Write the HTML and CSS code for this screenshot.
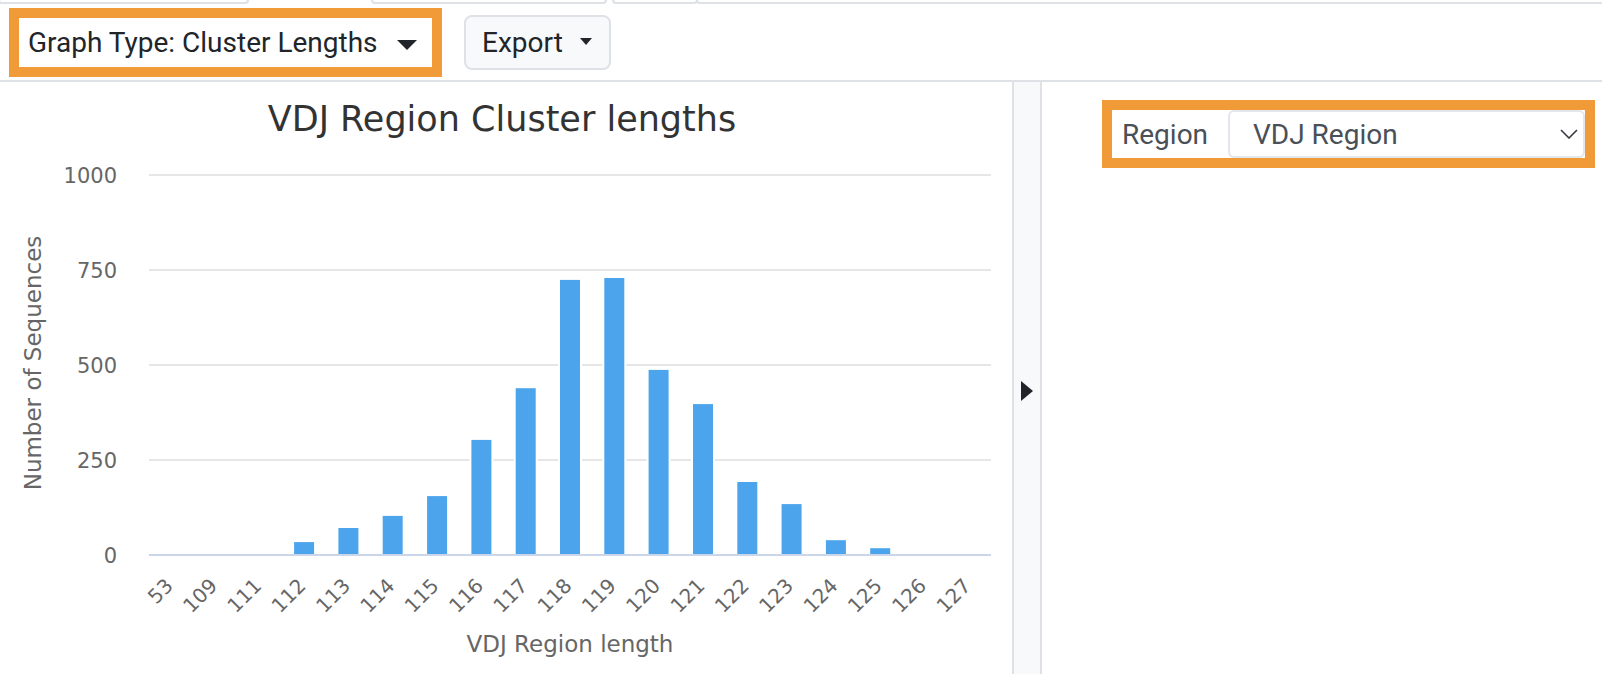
FILE: index.html
```html
<!DOCTYPE html>
<html lang="en">
<head>
    <meta charset="UTF-8">
    <meta name="viewport" content="width=device-width, initial-scale=1.0">
    <title>Cluster Lengths</title>
    <link rel="stylesheet" href="styles.css">
</head>
<body>
    <!-- bottom edge of the tab bar above -->
    <div class="tabs">
        <div class="tab tab-1"></div>
        <div class="tab tab-2"></div>
        <div class="tab tab-3"></div>
        <div class="tab tab-4"></div>
    </div>

    <div class="toolbar">
        <div class="highlight">
            <button class="graph-btn">Graph Type: Cluster Lengths <span class="caret"></span></button>
        </div>
        <button class="export-btn">Export <span class="caret caret-sm"></span></button>
    </div>

    <div class="main">
        <div class="chart-panel">
            <svg class="chart" viewBox="0 0 1012 592" xmlns="http://www.w3.org/2000/svg">
                <text class="chart-title" x="502" y="49" text-anchor="middle">VDJ Region Cluster lengths</text>

                <!-- grid -->
                <g class="grid">
                    <line x1="149" y1="93" x2="991" y2="93"/>
                    <line x1="149" y1="188" x2="991" y2="188"/>
                    <line x1="149" y1="283" x2="991" y2="283"/>
                    <line x1="149" y1="378" x2="991" y2="378"/>
                </g>

                <g class="y-labels" text-anchor="end">
                    <text x="117" y="101">1000</text>
                    <text x="117" y="196">750</text>
                    <text x="117" y="291">500</text>
                    <text x="117" y="386">250</text>
                    <text x="117" y="481">0</text>
                </g>

                <!-- bars -->
                <g class="bars">
                    <rect x="293.1" y="459.1" width="22" height="14.9"/>
                    <rect x="337.4" y="445" width="22" height="29"/>
                    <rect x="381.7" y="432.9" width="22" height="41.1"/>
                    <rect x="426.1" y="413.1" width="22" height="60.9"/>
                    <rect x="470.4" y="356.9" width="22" height="117.1"/>
                    <rect x="514.7" y="305.2" width="22" height="168.8"/>
                    <rect x="559" y="196.9" width="22" height="277.1"/>
                    <rect x="603.3" y="195" width="22" height="279"/>
                    <rect x="647.6" y="286.9" width="22" height="187.1"/>
                    <rect x="692" y="321.1" width="22" height="152.9"/>
                    <rect x="736.3" y="399" width="22" height="75"/>
                    <rect x="780.6" y="421.1" width="22" height="52.9"/>
                    <rect x="824.9" y="457.2" width="22" height="16.8"/>
                    <rect x="869.2" y="465.2" width="22" height="8.8"/>
                </g>

                <line class="axis" x1="149" y1="473" x2="991" y2="473"/>

                <g class="x-labels" text-anchor="end">
                    <text x="174.2" y="505" transform="rotate(-45 174.2 505)">53</text>
                    <text x="218.5" y="505" transform="rotate(-45 218.5 505)">109</text>
                    <text x="262.8" y="505" transform="rotate(-45 262.8 505)">111</text>
                    <text x="307.1" y="505" transform="rotate(-45 307.1 505)">112</text>
                    <text x="351.4" y="505" transform="rotate(-45 351.4 505)">113</text>
                    <text x="395.7" y="505" transform="rotate(-45 395.7 505)">114</text>
                    <text x="440.1" y="505" transform="rotate(-45 440.1 505)">115</text>
                    <text x="484.4" y="505" transform="rotate(-45 484.4 505)">116</text>
                    <text x="528.7" y="505" transform="rotate(-45 528.7 505)">117</text>
                    <text x="573" y="505" transform="rotate(-45 573 505)">118</text>
                    <text x="617.3" y="505" transform="rotate(-45 617.3 505)">119</text>
                    <text x="661.6" y="505" transform="rotate(-45 661.6 505)">120</text>
                    <text x="706" y="505" transform="rotate(-45 706 505)">121</text>
                    <text x="750.3" y="505" transform="rotate(-45 750.3 505)">122</text>
                    <text x="794.6" y="505" transform="rotate(-45 794.6 505)">123</text>
                    <text x="838.9" y="505" transform="rotate(-45 838.9 505)">124</text>
                    <text x="883.2" y="505" transform="rotate(-45 883.2 505)">125</text>
                    <text x="927.5" y="505" transform="rotate(-45 927.5 505)">126</text>
                    <text x="971.9" y="505" transform="rotate(-45 971.9 505)">127</text>
                </g>

                <text class="axis-title" x="570" y="570" text-anchor="middle">VDJ Region length</text>
                <text class="axis-title" x="41" y="281" text-anchor="middle" transform="rotate(-90 41 281)">Number of Sequences</text>
            </svg>
        </div>

        <div class="collapse-bar">
            <span class="arrow-right"></span>
        </div>

        <div class="side-panel">
            <div class="region-group">
                <span class="region-label">Region</span>
                <div class="region-select">
                    <span>VDJ Region</span>
                    <svg class="chevron" width="18" height="10" viewBox="0 0 18 10">
                        <path d="M1 1 L9 9 L17 1" fill="none" stroke="#343a40" stroke-width="1.6"/>
                    </svg>
                </div>
            </div>
        </div>
    </div>
</body>
</html>
```

FILE: styles.css
```css
:root {
    --highlight: #f09a38;
    --border: #dee2e6;
    --text: #212529;
    --muted: #495057;
    --bar: #4ca5ec;
}

* {
    box-sizing: border-box;
    margin: 0;
    padding: 0;
}

body {
    background: #fff;
    color: var(--text);
    font-family: Roboto, 'Liberation Sans', sans-serif;
    overflow: hidden;
}

/* tab bar edge */
.tabs {
    display: flex;
    height: 4px;
    overflow: hidden;
}

.tab {
    height: 4px;
    border: 2px solid var(--border);
    border-top: 0;
    border-radius: 0 0 6px 6px;
}

.tab-1 {
    width: 251px;
    margin-left: -2px;
}

.tab-2 {
    width: 236px;
    margin-left: 122px;
}

.tab-3 {
    width: 86px;
    margin-left: 5px;
}

.tab-4 {
    flex: 1;
    margin-left: -2px;
    margin-right: -4px;
}

/* toolbar */
.toolbar {
    display: flex;
    align-items: center;
    gap: 22px;
    height: 78px;
    padding-left: 9px;
    border-bottom: 2px solid var(--border);
}

.highlight {
    border: 10px solid var(--highlight);
}

.graph-btn {
    display: flex;
    align-items: center;
    justify-content: space-between;
    width: 413px;
    height: 49px;
    padding: 0 15px 0 9px;
    background: #fff;
    border: 0;
    font-family: inherit;
    font-size: 28px;
    color: var(--text);
}

.caret {
    width: 0;
    height: 0;
    margin-top: 5px;
    border-top: 10px solid var(--text);
    border-left: 10px solid transparent;
    border-right: 10px solid transparent;
}

.export-btn {
    display: flex;
    align-items: center;
    gap: 17px;
    height: 55px;
    padding: 0 17px 0 16px;
    background: #f8f9fa;
    border: 2px solid var(--border);
    border-radius: 8px;
    font-family: inherit;
    font-size: 28px;
    color: var(--text);
}

.caret-sm {
    margin-top: -2px;
    border-top-width: 7px;
    border-left-width: 6.5px;
    border-right-width: 6.5px;
}

/* main area */
.main {
    display: flex;
    height: 592px;
}

.chart-panel {
    width: 1012px;
}

.chart {
    display: block;
    width: 1012px;
    height: 592px;
    font-family: 'DejaVu Sans', sans-serif;
}

.chart-title {
    font-size: 35px;
    fill: #333;
}

.grid line {
    stroke: #e6e6e6;
    stroke-width: 2;
}

.axis {
    stroke: #ccd6eb;
    stroke-width: 2;
}

.bars rect {
    fill: var(--bar);
    stroke: #fff;
    stroke-width: 2;
}

.y-labels {
    font-size: 21px;
    fill: #666;
}

.x-labels {
    font-size: 20px;
    fill: #666;
}

.axis-title {
    font-size: 23px;
    fill: #666;
}

.collapse-bar {
    display: flex;
    justify-content: center;
    align-items: flex-start;
    width: 30px;
    padding-top: 299px;
    background: #f8f9fa;
    border-left: 2px solid var(--border);
    border-right: 2px solid var(--border);
}

.arrow-right {
    width: 0;
    height: 0;
    border-left: 12px solid var(--text);
    border-top: 10px solid transparent;
    border-bottom: 10px solid transparent;
}

.side-panel {
    flex: 1;
    padding: 18px 7px 0 60px;
}

.region-group {
    display: flex;
    height: 68px;
    border: 10px solid var(--highlight);
    background: #fff;
}

.region-label {
    display: flex;
    align-items: center;
    width: 116px;
    padding-left: 10px;
    font-size: 28px;
    color: var(--muted);
}

.region-select {
    flex: 1;
    display: flex;
    align-items: center;
    justify-content: space-between;
    padding: 0 5px 0 23px;
    border: 2px solid #e3e6ea;
    border-radius: 6px;
    font-size: 28px;
    color: var(--muted);
}

.chevron {
    display: block;
}
```
